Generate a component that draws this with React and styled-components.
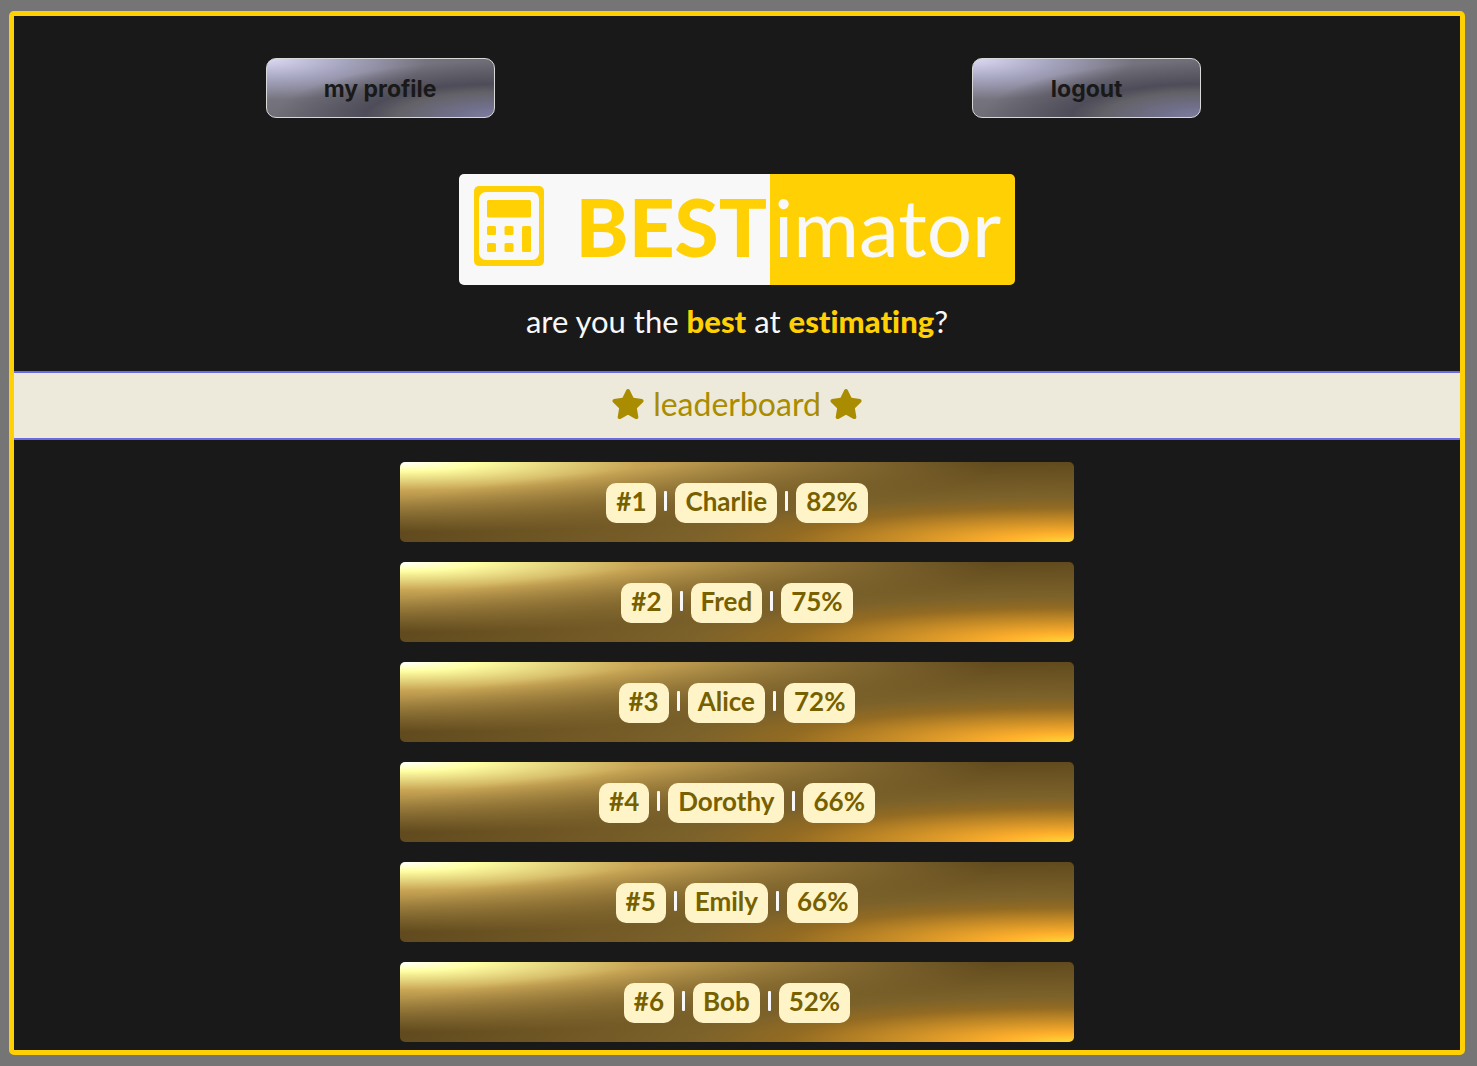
import React from "react";
import styled, { createGlobalStyle } from "styled-components";
import { FaStar } from "react-icons/fa6";

const GlobalStyle = createGlobalStyle`
  * {
    box-sizing: border-box;
  }
  body {
    margin: 0;
    background: #757575;
    color: #f8f8f8;
    font-family: Lato, "Open Sans", sans-serif;
    font-variant-ligatures: none;
  }
`;

const Page = styled.div`
  display: flex;
  min-height: 100vh;
  padding: 11px 12px 11px 9px;
`;

const Frame = styled.main`
  flex: 1;
  min-width: 0;
  padding: 42px 0 8px;
  background: #191919;
  border: 5px solid #ffd004;
  border-radius: 5px;
`;

const Toolbar = styled.nav`
  display: flex;
  justify-content: space-between;
  gap: 20px;
  padding: 0 17.9% 0 17.4%;
`;

const SilverButton = styled.button`
  width: 229px;
  height: 60px;
  padding: 2px 0 0;
  border: 1px solid #d8d8d8;
  border-radius: 10px;
  color: #191919;
  font: 700 23px Inter, sans-serif;
  background:
    radial-gradient(
      ellipse farthest-corner at right bottom,
      #7f7d9e 0%,
      #71708c 12%,
      #636268 30%,
      #4d4c58 40%,
      transparent 68%
    ),
    radial-gradient(
      ellipse farthest-corner at left top,
      #dcdaf0 0%,
      #cac8e3 8%,
      #a5a4bf 25%,
      #75737d 50%,
      #65646c 100%
    );
  cursor: pointer;
`;

const Header = styled.header`
  display: flex;
  flex-direction: column;
  align-items: center;
  margin-top: 56px;
`;

const Logo = styled.h1`
  display: flex;
  height: 111px;
  margin: 0;
  overflow: hidden;
  border-radius: 5px;
  font-size: 80px;
  line-height: 104px;
`;

const LogoBest = styled.span`
  display: flex;
  justify-content: space-between;
  width: 311px;
  padding: 0 3px 0 15px;
  background: #f8f8f8;
  color: #ffd004;
  font-weight: 900;
`;

const LogoRest = styled.span`
  width: 245px;
  padding-left: 4px;
  background: #ffd004;
  color: #f8f8f8;
  font-weight: 400;
`;

const CalculatorIcon = styled.svg`
  width: 70px;
  height: 80px;
  margin-top: 12px;
`;

const Tagline = styled.p`
  margin: 16px 0 0;
  font-size: 31px;
  line-height: 40px;

  strong {
    color: #ffd004;
    font-weight: 900;
  }
`;

const Banner = styled.h2`
  display: flex;
  justify-content: center;
  align-items: center;
  gap: 8px;
  height: 69px;
  margin: 30px 0 22px;
  padding-bottom: 4px;
  border: solid #6c6be0;
  border-width: 2px 0;
  background: #ede9db;
  color: #a98c00;
  font-size: 32px;
  font-weight: 400;

  svg {
    width: 34px;
    height: 32px;
  }
`;

const Board = styled.ol`
  display: flex;
  flex-direction: column;
  gap: 20px;
  width: 674px;
  max-width: 100%;
  margin: 0 auto;
  padding: 0;
  list-style: none;
`;

const Row = styled.li`
  display: flex;
  justify-content: center;
  align-items: center;
  gap: 8px;
  height: 80px;
  padding-top: 2px;
  border-radius: 5px;
  background:
    radial-gradient(
      ellipse farthest-corner at right bottom,
      #fed837 0%,
      #fdae2b 8%,
      #936b22 30%,
      #7c622a 40%,
      transparent 80%
    ),
    radial-gradient(
      ellipse farthest-corner at left top,
      #ffffff 0%,
      #ffffa4 8%,
      #c8a555 25%,
      #59431a 62%,
      #59431a 100%
    );
`;

const Chip = styled.span`
  height: 40px;
  padding: 0 10px;
  border-radius: 10px;
  background: #fff4c7;
  color: #766000;
  font-size: 26px;
  font-weight: 700;
  line-height: 37px;
`;

const Divider = styled.span`
  width: 3px;
  height: 20px;
  margin-bottom: 5px;
  border-radius: 1px;
  background: #f8f8f8;
`;

const players = [
  ["Charlie", 82],
  ["Fred", 75],
  ["Alice", 72],
  ["Dorothy", 66],
  ["Emily", 66],
  ["Bob", 52],
];

function Calculator() {
  return (
    <CalculatorIcon viewBox="0 0 70 80" aria-hidden="true">
      <rect width="70" height="80" rx="5" fill="#ffd004" />
      <rect x="5" y="6" width="60" height="68" rx="7" fill="#f8f8f8" />
      <g fill="#ffd004">
        <rect x="13" y="14" width="44" height="17.5" rx="1.5" />
        <rect x="13" y="40" width="9" height="9" rx="1.5" />
        <rect x="30.5" y="40" width="9" height="9" rx="1.5" />
        <rect x="13" y="57" width="9" height="9" rx="1.5" />
        <rect x="30.5" y="57" width="9" height="9" rx="1.5" />
        <rect x="48" y="40" width="9" height="26" rx="1.5" />
      </g>
    </CalculatorIcon>
  );
}

export default function App() {
  return (
    <>
      <GlobalStyle />
      <Page>
        <Frame>
          <Toolbar>
            <SilverButton type="button">my profile</SilverButton>
            <SilverButton type="button">logout</SilverButton>
          </Toolbar>
          <Header>
            <Logo>
              <LogoBest>
                <Calculator />
                BEST
              </LogoBest>
              <LogoRest>imator</LogoRest>
            </Logo>
            <Tagline>
              are you the <strong>best</strong> at <strong>estimating</strong>?
            </Tagline>
          </Header>
          <Banner>
            <FaStar aria-hidden="true" />
            leaderboard
            <FaStar aria-hidden="true" />
          </Banner>
          <Board>
            {players.map(([name, score], index) => (
              <Row key={name}>
                <Chip>#{index + 1}</Chip>
                <Divider />
                <Chip>{name}</Chip>
                <Divider />
                <Chip>{score}%</Chip>
              </Row>
            ))}
          </Board>
        </Frame>
      </Page>
    </>
  );
}
